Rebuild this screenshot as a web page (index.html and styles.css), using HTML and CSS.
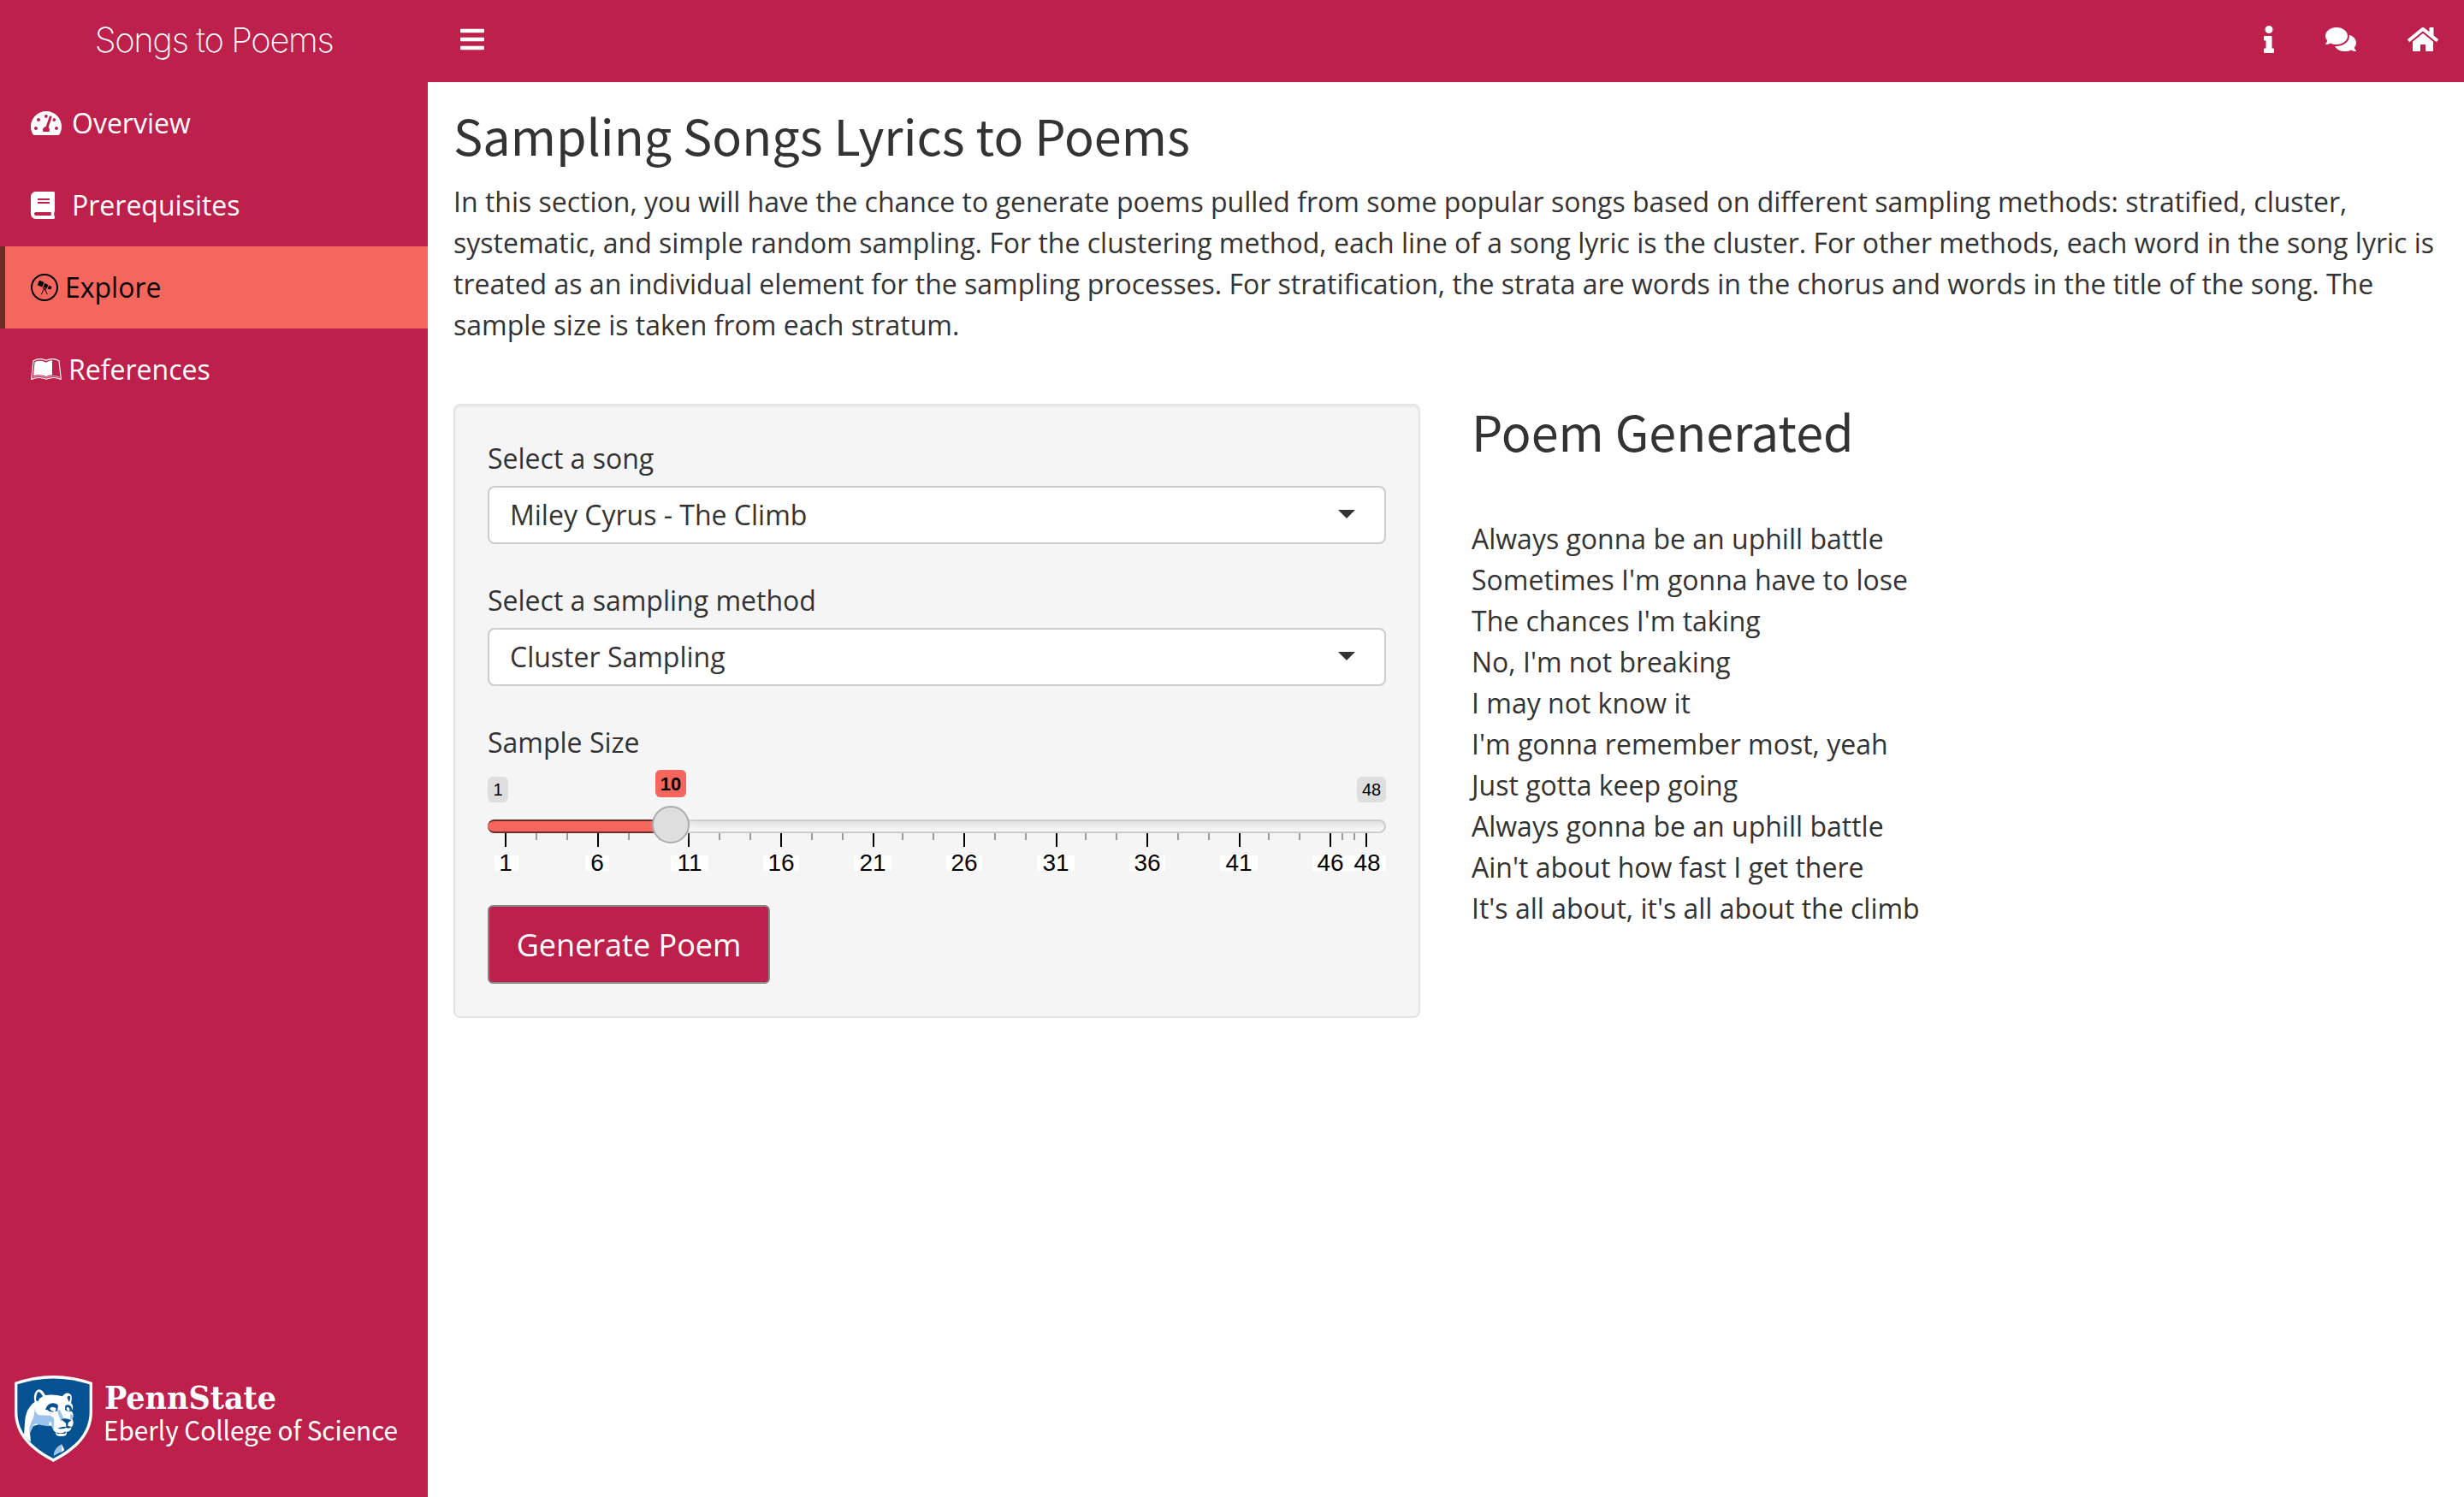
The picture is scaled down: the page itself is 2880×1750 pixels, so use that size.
FILE: index.html
```html
<!DOCTYPE html>
<html lang="en">
<head>
<meta charset="utf-8">
<title>Songs to Poems</title>
<link rel="stylesheet" href="styles.css">
</head>
<body>
<div class="app">
  <aside class="sidebar">
    <div class="brand"><span class="brand-name">Songs to Poems</span></div>
    <nav class="menu">
      <a class="menu-item">
        <span class="icon-fixed"><svg width="36" height="32" viewBox="0 0 576 512"><path fill="currentColor" d="M288 32C128.94 32 0 160.94 0 320c0 52.8 14.25 102.26 39.06 144.8 5.61 9.62 16.3 15.2 27.44 15.2h443c11.14 0 21.83-5.58 27.44-15.2C561.75 422.26 576 372.8 576 320c0-159.06-128.94-288-288-288zm0 64c14.71 0 26.58 10.13 30.32 23.65-1.11 2.26-2.64 4.23-3.45 6.67l-9.22 27.67c-5.13 3.49-10.97 6.01-17.64 6.01-17.67 0-32-14.33-32-32S270.33 96 288 96zM96 384c-17.67 0-32-14.33-32-32s14.33-32 32-32 32 14.33 32 32-14.33 32-32 32zm48-160c-17.67 0-32-14.33-32-32s14.33-32 32-32 32 14.33 32 32-14.33 32-32 32zm246.77-72.41l-61.33 184C343.13 347.33 352 364.54 352 384c0 11.72-3.38 22.55-8.88 32H232.88c-5.5-9.45-8.88-20.28-8.88-32 0-33.94 26.5-61.43 59.9-63.59l61.34-184.01c4.17-12.56 17.73-19.45 30.36-15.17 12.57 4.19 19.35 17.79 15.17 30.36zm14.66 57.2l15.52-46.55c3.47-1.29 7.13-2.23 11.05-2.23 17.67 0 32 14.33 32 32s-14.33 32-32 32c-11.38-.01-20.89-6.28-26.57-15.22zM480 384c-17.67 0-32-14.33-32-32s14.33-32 32-32 32 14.33 32 32-14.33 32-32 32z"/></svg></span>
        <span>Overview</span>
      </a>
      <a class="menu-item">
        <span class="icon-fixed"><svg width="28" height="32" viewBox="0 0 448 512"><path fill="currentColor" d="M448 360V24c0-13.3-10.7-24-24-24H96C43 0 0 43 0 96v320c0 53 43 96 96 96h328c13.3 0 24-10.7 24-24v-16c0-7.5-3.5-14.3-8.9-18.7-4.2-15.4-4.2-59.3 0-74.7 5.4-4.3 8.9-11.1 8.9-18.6zM128 134c0-3.3 2.7-6 6-6h212c3.3 0 6 2.7 6 6v20c0 3.3-2.7 6-6 6H134c-3.3 0-6-2.7-6-6v-20zm0 64c0-3.3 2.7-6 6-6h212c3.3 0 6 2.7 6 6v20c0 3.3-2.7 6-6 6H134c-3.3 0-6-2.7-6-6v-20zm253.4 250H96c-17.7 0-32-14.3-32-32 0-17.6 14.4-32 32-32h285.4c-1.9 17.1-1.9 46.9 0 64z"/></svg></span>
        <span>Prerequisites</span>
      </a>
      <a class="menu-item active">
        <svg width="32" height="32" viewBox="0 0 512 512"><path fill="currentColor" d="M512 256c0 141.2-114.7 256-256 256C114.8 512 0 397.3 0 256S114.7 0 256 0s256 114.7 256 256zm-32 0c0-123.2-100.3-224-224-224C132.5 32 32 132.5 32 256s100.5 224 224 224 224-100.5 224-224zM160.9 124.6l86.9 37.1-37.1 86.9-86.9-37.1 37.1-86.9zm110 169.1l46.6 94h-14.6l-50-100-48.9 100h-14l51.1-106.9-22.3-9.4 6-14 68.6 29.1-6 14.3-16.5-7.1zm-11.8-116.3l68.6 29.4-29.4 68.3L230 246l29.1-68.6zm80.3 42.9l54.6 23.1-23.4 54.3-54.3-23.1 23.1-54.3z"/></svg>
        <span>Explore</span>
      </a>
      <a class="menu-item">
        <svg width="36" height="32" viewBox="18 12 108 96"><g fill="none" stroke="currentColor"><path stroke-width="3.4" stroke-linejoin="round" d="M20 94.500L27 29Q50 17 72 28Q94 17 117 29L124 94.500Q98 83 72 94Q46 83 20 94.500Z"/><path stroke-width="2" d="M25 87Q48 78 72 88Q96 78 119 87"/></g><path fill="currentColor" d="M32 33Q52 24 72 35Q82 29 93 28V79Q82 79 72 84Q50 75 27 82Z"/></svg>
        <span>References</span>
      </a>
    </nav>
    <svg class="logo" width="468" height="104" viewBox="0 0 468 104" role="img" aria-label="PennState Eberly College of Science">
      <g transform="translate(-6 -8) scale(.33333)">
        <path fill="#fff" d="M21 48Q157 0 294 48V150C294 232 238 285 157 327C76 285 21 232 21 150Z"/>
        <path fill="#055293" d="M31 55Q157 14 284 55V150C284 226 232 276 157 315C82 276 31 226 31 150Z"/>
        <path fill="#fff" d="M54 232C58 196 54 162 73 136Q81 122 92 117C84 91 97 73 108 73C120 76 123 84 129 93Q160 88 189 97C196 87 206 82 216 89C224 95 222 108 219 121C230 130 225 143 221 149C229 158 228 169 223 174C229 188 229 196 220 206C220 216 211 221 203 221C207 231 199 237 185 237C171 237 164 233 166 224L158 217L151 201L137 199L111 194L87 201L75 224L78 257Q64 248 54 232Z"/>
        <path fill="#9cc3ec" d="M91 137Q94 158 107 163L145 164Q157 167 160 178L158 214Q149 206 151 190L143 186L140 202Q116 201 95 193L87 198L75 226Q69 210 82 182Q93 165 91 137ZM170 146L180 145L194 175L184 185ZM216 160L228 164L225 174L217 180ZM158 306Q157 280 187 264L184 292Z"/>
        <path fill="#fff" d="M187 266L196 285L184 294Z"/>
        <path fill="#055293" d="M96 111Q97 83 106 80Q114 84 120 97L108 105L104 115ZM205 100Q212 91 217 99Q217 109 212 117ZM129 143Q136 122 155 121Q170 121 174 130L171 148L161 151Q169 143 165 137L150 134L144 141Q148 148 160 151Q145 154 136 145ZM199 130Q208 122 220 133L224 149L211 150Q218 145 214 140L205 135L203 140Q205 147 211 150Q201 149 198 143ZM185 178Q200 171 220 181L209 190L208 201L222 204Q211 212 202 207Q187 214 172 209L188 204L202 203L201 191ZM167 223Q184 231 202 220L198 228H172Z"/>
        <circle fill="#fff" cx="155" cy="139" r="5"/>
        <circle fill="#fff" cx="208" cy="139" r="4"/>
      </g>
      <text class="logo-name" x="106" y="38.500" textLength="201" lengthAdjust="spacingAndGlyphs">PennState</text>
      <text class="logo-college" x="105" y="75.500" textLength="344" lengthAdjust="spacingAndGlyphs">Eberly College of Science</text>
    </svg>
  </aside>

  <div class="page">
    <header class="topbar">
      <svg width="28" height="32" viewBox="0 0 448 512"><path fill="currentColor" d="M16 132h416c8.837 0 16-7.163 16-16V76c0-8.837-7.163-16-16-16H16C7.163 60 0 67.163 0 76v40c0 8.837 7.163 16 16 16zm0 160h416c8.837 0 16-7.163 16-16v-40c0-8.837-7.163-16-16-16H16c-8.837 0-16 7.163-16 16v40c0 8.837 7.163 16 16 16zm0 160h416c8.837 0 16-7.163 16-16v-40c0-8.837-7.163-16-16-16H16c-8.837 0-16 7.163-16 16v40c0 8.837 7.163 16 16 16z"/></svg>
      <div class="topbar-links">
        <svg width="12" height="32" viewBox="0 0 192 512"><path fill="currentColor" d="M20 424.229h20V279.771H20c-11.046 0-20-8.954-20-20V212c0-11.046 8.954-20 20-20h112c11.046 0 20 8.954 20 20v212.229h20c11.046 0 20 8.954 20 20V492c0 11.046-8.954 20-20 20H20c-11.046 0-20-8.954-20-20v-47.771c0-11.046 8.954-20 20-20zM96 0C56.235 0 24 32.235 24 72s32.235 72 72 72 72-32.235 72-72S135.764 0 96 0z"/></svg>
        <svg width="36" height="32" viewBox="0 0 576 512"><path fill="currentColor" d="M416 192c0-88.400-93.100-160-208-160S0 103.600 0 192c0 34.300 14.100 65.900 38 92-13.400 30.200-35.500 54.200-35.800 54.500-2.200 2.300-2.800 5.700-1.500 8.700S4.800 352 8 352c36.600 0 66.900-12.300 88.700-25 32.200 15.700 70.300 25 111.300 25 114.900 0 208-71.600 208-160zm122 220c23.900-26 38-57.700 38-92 0-66.900-53.500-124.200-129.300-148.100.9 6.600 1.300 13.300 1.300 20.100 0 105.900-107.700 192-240 192-10.800 0-21.300-.8-31.700-1.900C207.800 439.600 281.800 480 368 480c41 0 79.100-9.200 111.300-25 21.800 12.700 52.100 25 88.700 25 3.200 0 6.100-1.900 7.300-4.800 1.300-2.900.7-6.300-1.500-8.700-.3-.3-22.400-24.200-35.800-54.500z"/></svg>
        <svg width="36" height="32" viewBox="0 0 576 512"><path fill="currentColor" d="M280.370 148.260L96 300.110V464a16 16 0 0 0 16 16l112.060-.29a16 16 0 0 0 15.920-16V368a16 16 0 0 1 16-16h64a16 16 0 0 1 16 16v95.640a16 16 0 0 0 16 16.050L464 480a16 16 0 0 0 16-16V300L295.670 148.260a12.190 12.190 0 0 0-15.300 0zM571.600 251.470L488 182.560V44.050a12 12 0 0 0-12-12h-56a12 12 0 0 0-12 12v72.610L318.470 43a48 48 0 0 0-61 0L4.340 251.470a12 12 0 0 0-1.600 16.900l25.500 31A12 12 0 0 0 45.150 301l235.220-193.740a12.190 12.190 0 0 1 15.300 0L530.900 301a12 12 0 0 0 16.900-1.600l25.500-31a12 12 0 0 0-1.700-16.930z"/></svg>
      </div>
    </header>

    <main class="content">
      <h2>Sampling Songs Lyrics to Poems</h2>
      <p class="intro">In this section, you will have the chance to generate poems pulled from some popular songs based on different sampling methods: stratified, cluster, systematic, and simple random sampling. For the clustering method, each line of a song lyric is the cluster. For other methods, each word in the song lyric is treated as an individual element for the sampling processes. For stratification, the strata are words in the chorus and words in the title of the song. The sample size is taken from each stratum.</p>

      <div class="columns">
        <section class="well">
          <div class="field">
            <span class="label">Select a song</span>
            <div class="select"><span>Miley Cyrus - The Climb</span><i class="caret"></i></div>
          </div>
          <div class="field">
            <span class="label">Select a sampling method</span>
            <div class="select"><span>Cluster Sampling</span><i class="caret"></i></div>
          </div>
          <div class="slider-field">
            <span class="label">Sample Size</span>
            <div class="slider">
              <span class="limit limit-min">1</span>
              <span class="limit limit-max">48</span>
              <span class="value">10</span>
              <div class="track"><div class="fill"></div></div>
              <svg class="ticks" width="1050" height="60" viewBox="0 0 1050 60">
                <path fill="#999" d="M56 0h2v8h-2zM92 0h2v8h-2zM164 0h2v8h-2zM200 0h2v8h-2zM270 0h2v8h-2zM306 0h2v8h-2zM378 0h2v8h-2zM414 0h2v8h-2zM484 0h2v8h-2zM520 0h2v8h-2zM592 0h2v8h-2zM628 0h2v8h-2zM698 0h2v8h-2zM734 0h2v8h-2zM806 0h2v8h-2zM842 0h2v8h-2zM912 0h2v8h-2zM948 0h2v8h-2zM998 0h2v8h-2zM1012 0h2v8h-2z"/>
                <path fill="#000" d="M20 0h2v16h-2zM128 0h2v16h-2zM234 0h2v16h-2zM342 0h2v16h-2zM450 0h2v16h-2zM556 0h2v16h-2zM664 0h2v16h-2zM770 0h2v16h-2zM878 0h2v16h-2zM984 0h2v16h-2zM1026 0h2v16h-2z"/>
                <path fill="#fff" d="M8 26h28v18H8zM114 26h28v18h-28zM214 26h44v18h-44zM322 26h42v18h-42zM428 26h44v18h-44zM536 26h42v18h-42zM642 26h44v18h-44zM750 26h42v18h-42zM856 26h44v18h-44zM964 26h86v18h-86z"/>
                <g class="tick-labels">
                  <text x="21" y="44">1</text><text x="128" y="44">6</text><text x="236" y="44">11</text><text x="343" y="44">16</text><text x="450" y="44">21</text><text x="557" y="44">26</text><text x="664" y="44">31</text><text x="771" y="44">36</text><text x="878" y="44">41</text><text x="985" y="44">46</text><text x="1028" y="44">48</text>
                </g>
              </svg>
              <span class="handle"></span>
            </div>
          </div>
          <button class="generate" type="button">Generate Poem</button>
        </section>

        <section class="poem">
          <h2>Poem Generated</h2>
          <p>Always gonna be an uphill battle<br>Sometimes I'm gonna have to lose<br>The chances I'm taking<br>No, I'm not breaking<br>I may not know it<br>I'm gonna remember most, yeah<br>Just gotta keep going<br>Always gonna be an uphill battle<br>Ain't about how fast I get there<br>It's all about, it's all about the climb</p>
        </section>
      </div>
    </main>
  </div>
</div>
</body>
</html>
```
FILE: styles.css
```css
* { box-sizing: border-box; }

body {
  margin: 0;
  background: #fff;
  color: #333;
  font: 32px/48px "Open Sans", sans-serif;
}

h2, p { margin: 0; }
svg { display: block; flex: none; }

.app { display: flex; height: 1750px; }

.sidebar {
  display: flex;
  flex-direction: column;
  flex: none;
  width: 500px;
  background: #bc204b;
  color: #fff;
}

.brand {
  display: flex;
  align-items: center;
  justify-content: center;
  height: 96px;
  padding-bottom: 3px;
}

.brand-name {
  font-family: Inter, sans-serif;
  font-size: 40px;
  font-weight: 200;
  letter-spacing: -1.4px;
}

.menu-item {
  display: flex;
  align-items: center;
  gap: 8px;
  height: 96px;
  padding-left: 30px;
  border-left: 6px solid transparent;
}

.menu-item.active {
  background: #f5675d;
  border-left-color: #6c2c28;
  color: #000;
}

.icon-fixed { flex: none; width: 40px; }

.logo { margin: auto 0 38px 16px; }

.logo text { fill: #fff; }
.logo-name { font: bold 38px "DejaVu Serif", serif; }
.logo-college { font: 31px "Noto Sans CJK SC", sans-serif; }

.page { flex: 1; }

.topbar {
  display: flex;
  align-items: center;
  justify-content: space-between;
  height: 96px;
  padding: 0 30px 4px 38px;
  background: #bc204b;
  color: #fff;
}

.topbar-links { display: flex; gap: 60px; }

.content { padding: 25px 30px 30px; }

h2 {
  font: 400 57.5px/72px "Noto Sans CJK SC", sans-serif;
}

.intro { margin-top: 19px; }

.columns {
  display: grid;
  grid-template-columns: 1130px 1fr;
  gap: 60px;
  margin-top: 68px;
}

.well {
  height: 718px;
  padding: 38px;
  background: #f5f5f5;
  border: 2px solid #e3e3e3;
  border-radius: 8px;
  box-shadow: inset 0 2px 2px rgba(0, 0, 0, .05);
}

.label { display: block; }

.field { margin-bottom: 42px; }

.select {
  display: flex;
  align-items: center;
  justify-content: space-between;
  height: 68px;
  margin-top: 8px;
  padding: 0 34px 0 24px;
  background: #fff;
  border: 2px solid #ccc;
  border-radius: 8px;
}

.caret {
  border: 10px solid transparent;
  border-top-color: #333;
  border-bottom: 0;
  margin-bottom: 2px;
}

.slider {
  position: relative;
  height: 166px;
  padding-top: 66px;
  font-family: "Liberation Sans", sans-serif;
  color: #000;
}

.limit, .value {
  position: absolute;
  border-radius: 6px;
  text-align: center;
}

.limit {
  top: 16px;
  height: 30px;
  background: #dedede;
  font-size: 20px;
  line-height: 30px;
}

.limit-min { left: 0; width: 24px; }
.limit-max { right: 0; width: 34px; }

.value {
  top: 8px;
  left: 196px;
  width: 36px;
  height: 32px;
  background: #f5675d;
  font-size: 22px;
  font-weight: bold;
  line-height: 33px;
}

.track {
  height: 16px;
  background: linear-gradient(#e2e2e2, #f9f9f9);
  border: 2px solid #ccc;
  border-radius: 16px;
}

.fill {
  width: 216px;
  height: 16px;
  margin: -2px;
  background: #f5675d;
  border: solid #6c2c28;
  border-width: 2px 0;
  border-radius: 16px 0 0 16px;
}

.tick-labels text {
  font-size: 28px;
  text-anchor: middle;
}

.handle {
  position: absolute;
  top: 50px;
  left: 192px;
  width: 44px;
  height: 44px;
  background: #dedede;
  border: 2px solid #ababab;
  border-radius: 50%;
  box-shadow: 2px 2px 6px rgba(255, 255, 255, .3);
}

.generate {
  display: block;
  width: 330px;
  height: 92px;
  padding: 2px 0 0;
  background: #bc204b;
  border: 2px solid #888;
  border-radius: 6px;
  color: #fff;
  font: 36px/48px "Open Sans", sans-serif;
}

.poem h2 { margin-top: -5px; }
.poem p { margin-top: 67px; }
```
